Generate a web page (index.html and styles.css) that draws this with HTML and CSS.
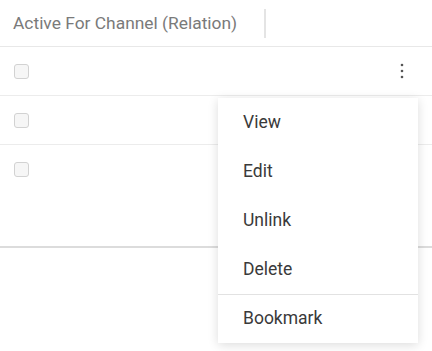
FILE: index.html
```html
<!DOCTYPE html>
<html lang="en">
<head>
    <meta charset="UTF-8">
    <title>Records</title>
    <link rel="stylesheet" href="styles.css">
</head>
<body>
    <div id="page">
        <div class="listPanel">
            <div class="headRow">
                <span class="headLabel">Active For Channel (Relation)</span>
                <span class="headDivider"></span>
            </div>
            <div class="row">
                <span class="checkBox"></span>
                <button class="kebab" aria-label="More actions">
                    <svg width="4" height="16" viewBox="0 0 4 16"><circle cx="2" cy="2" r="1.3"/><circle cx="2" cy="8" r="1.3"/><circle cx="2" cy="14" r="1.3"/></svg>
                </button>
            </div>
            <div class="row">
                <span class="checkBox"></span>
            </div>
            <div class="row lastRow">
                <span class="checkBox"></span>
            </div>
        </div>

        <ul class="actionMenu">
            <li>View</li>
            <li>Edit</li>
            <li>Unlink</li>
            <li>Delete</li>
            <li class="sepTop">Bookmark</li>
        </ul>
    </div>
</body>
</html>
```

FILE: styles.css
```css
body{
    margin: 0;
    padding: 0;
    background-color: #ffffff;
    font-family: 'Roboto', sans-serif;
}

#page{
    position: relative;
    width: 432px;
    height: 351px;
    overflow: hidden;
}

.listPanel{
    border-bottom: 2px solid #dcdcdc;
}

.headRow{
    display: flex;
    align-items: center;
    height: 46px;
    border-bottom: 1px solid #e8e8e8;
    padding-left: 13px;
}

.headLabel{
    font-size: 17.4px;
    color: #7a7a7a;
    width: 251px;
    white-space: nowrap;
}

.headDivider{
    width: 2px;
    height: 29px;
    background-color: #e4e4e4;
}

.row{
    display: flex;
    align-items: center;
    justify-content: space-between;
    height: 48px;
    border-bottom: 1px solid #ececec;
    padding: 0 28px 0 14px;
}

.lastRow{
    height: 101px;
    align-items: flex-start;
    padding-top: 17px;
    box-sizing: border-box;
    border-bottom: none;
}

.checkBox{
    width: 13px;
    height: 13px;
    border: 1px solid #d2d2d2;
    border-radius: 3px;
    background-color: #f6f6f6;
}

.kebab{
    border: none;
    background: none;
    padding: 0;
    display: flex;
    fill: #555555;
}

.actionMenu{
    position: absolute;
    top: 98px;
    left: 218px;
    width: 200px;
    margin: 0;
    padding: 0;
    list-style: none;
    background-color: #ffffff;
    box-shadow: 0 2px 10px rgba(0, 0, 0, 0.14);
}

.actionMenu li{
    height: 49px;
    line-height: 49px;
    padding-left: 25px;
    font-size: 17.5px;
    color: #3a3a3a;
}

.actionMenu .sepTop{
    border-top: 1px solid #e2e2e2;
    height: 48px;
    line-height: 47px;
}
```
